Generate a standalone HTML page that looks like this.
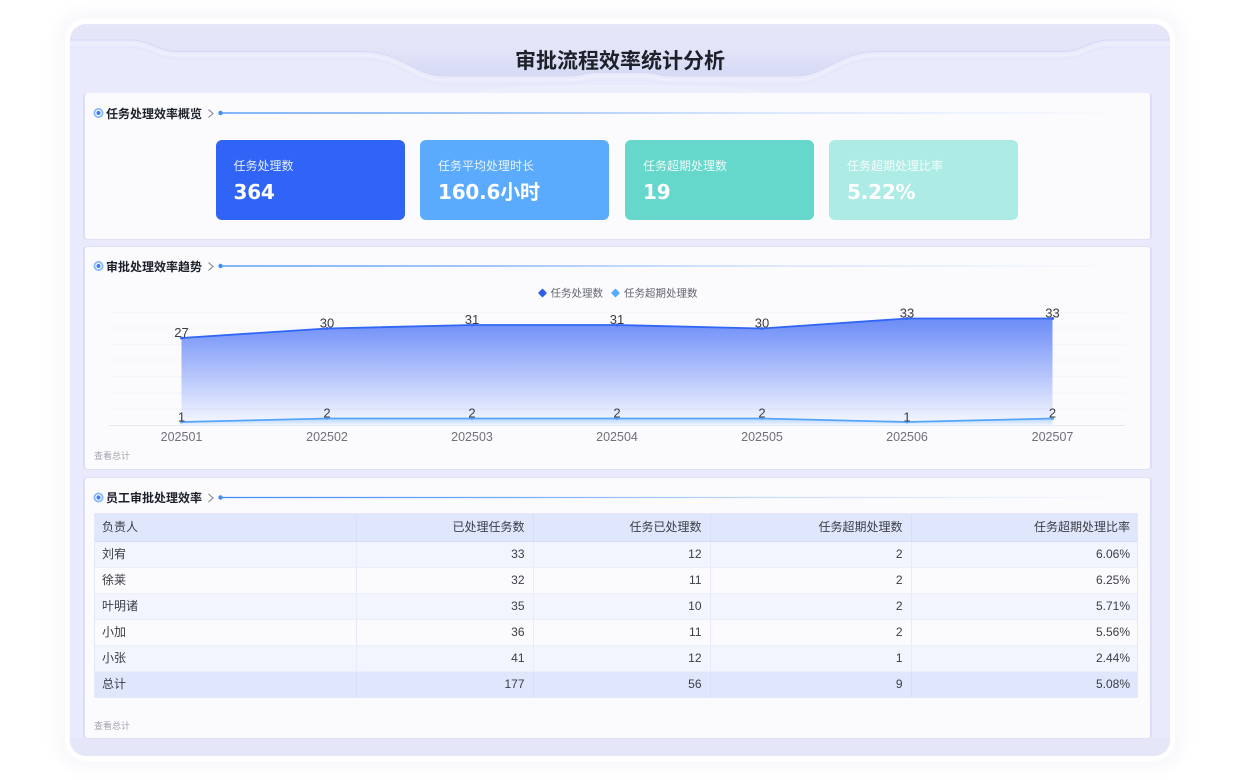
<!DOCTYPE html>
<html lang="zh"><head><meta charset="utf-8"><title>审批流程效率统计分析</title>
<style>
*{box-sizing:border-box;margin:0;padding:0}
html,body{width:1240px;height:780px;overflow:hidden;background:#fff}
body{position:relative;font-family:"Liberation Sans","Noto Sans CJK SC",sans-serif;color:#333}
.abs{position:absolute}
.glow{left:54px;top:8px;width:1132px;height:764px;border-radius:30px;background:#fafafd;filter:blur(5px)}
.rim{left:65px;top:19px;width:1110px;height:742px;border-radius:22px;background:#fff}
.frame{left:70px;top:24px;width:1100px;height:732px;border-radius:16px;background:#e9eafb;overflow:hidden}
.title{left:70px;top:46.500px;width:1100px;text-align:center;font-size:21px;line-height:30px;font-weight:700;color:#1d2129}
.panel{left:82.500px;width:1069.500px;background:#fbfbfe;border:1px solid #dfe0f8;border-left:2px solid #dcddf8;border-right:2px solid #dcddf8;border-radius:4px}
.h{position:absolute;left:106px;font-size:12px;line-height:16px;font-weight:700;color:#1d2129;white-space:nowrap}
.kpi{position:absolute;top:140px;height:80px;border-radius:6px;color:#fff;padding-left:18px}
.kpi .a{position:absolute;top:18px;font-size:12px;line-height:16px;white-space:nowrap;opacity:.88}
.kpi .b{position:absolute;top:37px;font:700 20px/30px "DejaVu Sans","Noto Sans CJK SC",sans-serif;letter-spacing:-.2px;white-space:nowrap}
.more{position:absolute;left:94px;font-size:9px;line-height:12px;color:#a2a3ad}
.t{position:absolute;left:94px;top:513px;width:1044px;height:184px;border-collapse:collapse;table-layout:fixed;font-size:12px;color:#3b3d45;outline:1px solid #e2e7fb;outline-offset:-1px}
.t td{padding:0 8px 1px;text-align:right;border-right:1px solid #e7eafa;border-bottom:1px solid #eceefb;white-space:nowrap;overflow:hidden}
.t tr:first-child td{padding-bottom:0}
.t td:first-child{text-align:left}
.t td:last-child{border-right:0}
.t tr.o{background:#f2f4fe}.t tr.e{background:#fbfbfe}
.t tr.s{background:#e0e6fc}
.t tr.s td{border-right-color:#d6def9;border-bottom-color:#d6def9}
svg{position:absolute;left:0;top:0}
</style></head><body>
<div class="abs glow"></div><div class="abs rim"></div><div class="abs frame"></div>
<svg width="1240" height="780" viewBox="0 0 1240 780" fill="none">
<defs>
<linearGradient id="hd" x1="0" y1="24" x2="0" y2="78" gradientUnits="userSpaceOnUse"><stop offset="0" stop-color="#e5e6f8"/><stop offset=".45" stop-color="#e3e4f8"/><stop offset="1" stop-color="#d5d9f5"/></linearGradient>
<linearGradient id="ar" x1="0" y1="318" x2="0" y2="425" gradientUnits="userSpaceOnUse"><stop offset="0" stop-color="#6a8bf8"/><stop offset="1" stop-color="#6a8bf8" stop-opacity=".03"/></linearGradient>
<linearGradient id="ar2" x1="0" y1="418" x2="0" y2="426" gradientUnits="userSpaceOnUse"><stop offset="0" stop-color="#8fc4ff" stop-opacity=".6"/><stop offset="1" stop-color="#8fc4ff" stop-opacity="0"/></linearGradient>
<linearGradient id="ln" x1="220" y1="0" x2="1130" y2="0" gradientUnits="userSpaceOnUse"><stop offset="0" stop-color="#3f8bf7"/><stop offset=".3" stop-color="#6ea8fa"/><stop offset=".6" stop-color="#c9dcfd"/><stop offset="1" stop-color="#c9dcfd" stop-opacity="0"/></linearGradient>
<clipPath id="fc"><rect x="70" y="24" width="1100" height="732" rx="16"/></clipPath>
</defs>
<g clip-path="url(#fc)">
<path d="M70 24H1170V40H1108C1090 40 1082 51 1062 51.500H878C838 51.500 826 76 796 76H668C660 76 654 72.500 644 72.500H596C586 72.500 580 76 572 76H444C414 76 402 51.500 362 51.500H178C158 51.500 150 40 132 40H70Z" fill="url(#hd)"/>
<path d="M70 40H132C150 40 158 51.500 178 51.500H362C402 51.500 414 76 444 76H572C580 76 586 72.500 596 72.500H644C654 72.500 660 76 668 76H796C826 76 838 51.500 878 51.500H1062C1082 51.500 1090 40 1108 40H1170" stroke="#d6d8f3" stroke-width="1"/>
<path d="M70 44H132C150 44 158 55.500 178 55.500H362C402 55.500 414 80 444 80H572C580 80 586 76.500 596 76.500H644C654 76.500 660 80 668 80H796C826 80 838 55.500 878 55.500H1062C1082 55.500 1090 44 1108 44H1170" stroke="#eef0fc" stroke-width="1.500"/>
<path d="M70 47.500H132C150 47.500 158 59 178 59H362C402 59 414 84 444 84H572C580 84 586 80 596 80H644C654 80 660 84 668 84H796C826 84 838 59 878 59H1062C1082 59 1090 47.500 1108 47.500H1170" stroke="#e3e5f8" stroke-width="1"/>
<path d="M70 738H1170V756H70Z" fill="#e5e6f7"/>
<path d="M470 93C500 82 740 82 770 93Z" fill="#f0f1fd" opacity=".5"/>
</g>
</svg>
<div class="abs title">审批流程效率统计分析</div>
<div class="abs panel" style="top:93px;height:147px;border-top:0"></div>
<div class="abs panel" style="top:246px;height:224px"></div>
<div class="abs panel" style="top:477px;height:262px"></div>

<svg width="1240" height="780" viewBox="0 0 1240 780" fill="none">
<g><circle cx="98.500" cy="113" r="5" fill="#86b8fb"/><circle cx="98.500" cy="113" r="3.200" fill="#fff"/><circle cx="98.500" cy="113" r="2.100" fill="#3c7ff5"/>
<path d="M208.500 109.500L213 113.500L208.500 117.500" stroke="#85868f" stroke-width="1.100"/><circle cx="220.500" cy="113" r="2.200" fill="#3f8bf7"/><path d="M220 113H1130" stroke="url(#ln)" stroke-width="1.300"/></g>
<g><circle cx="98.500" cy="266" r="5" fill="#86b8fb"/><circle cx="98.500" cy="266" r="3.200" fill="#fff"/><circle cx="98.500" cy="266" r="2.100" fill="#3c7ff5"/>
<path d="M208.500 262.500L213 266.500L208.500 270.500" stroke="#85868f" stroke-width="1.100"/><circle cx="220.500" cy="266" r="2.200" fill="#3f8bf7"/><path d="M220 266H1130" stroke="url(#ln)" stroke-width="1.300"/></g>
<g><circle cx="98.500" cy="497.500" r="5" fill="#86b8fb"/><circle cx="98.500" cy="497.500" r="3.200" fill="#fff"/><circle cx="98.500" cy="497.500" r="2.100" fill="#3c7ff5"/>
<path d="M208.500 494L213 498L208.500 502" stroke="#85868f" stroke-width="1.100"/><circle cx="220.500" cy="497.500" r="2.200" fill="#3f8bf7"/><path d="M220 497.500H1130" stroke="url(#ln)" stroke-width="1.300"/></g>

<g stroke="#f5f5fa" stroke-width="1"><path d="M109 312.500H1125M109 328H1125M109 344.500H1125M109 360H1125M109 376.500H1125M109 393H1125M109 409H1125"/></g>
<path d="M109 425.500H1125" stroke="#e8e9f0"/>
<path d="M181.500 338L327 328.500L472 325L617 325L762 328.500L907 318.500L1052.500 318.500V425H181.500Z" fill="url(#ar)"/>
<path d="M181.500 422L327 418.500L472 418.500L617 418.500L762 418.500L907 422L1052.500 418.500V425H181.500Z" fill="url(#ar2)"/>
<path d="M181.500 338L327 328.500L472 325L617 325L762 328.500L907 318.500L1052.500 318.500" stroke="#3066f5" stroke-width="1.800"/>
<path d="M181.500 422L327 418.500L472 418.500L617 418.500L762 418.500L907 422L1052.500 418.500" stroke="#55a6fb" stroke-width="1.800"/>
<g fill="#3066f5"><circle cx="181.500" cy="338" r="1.500"/><circle cx="327" cy="328.500" r="1.500"/><circle cx="472" cy="325" r="1.500"/><circle cx="617" cy="325" r="1.500"/><circle cx="762" cy="328.500" r="1.500"/><circle cx="907" cy="318.500" r="1.500"/><circle cx="1052.500" cy="318.500" r="1.500"/></g>
<g fill="#55a6fb"><circle cx="181.500" cy="422" r="1.500"/><circle cx="327" cy="418.500" r="1.500"/><circle cx="472" cy="418.500" r="1.500"/><circle cx="617" cy="418.500" r="1.500"/><circle cx="762" cy="418.500" r="1.500"/><circle cx="907" cy="422" r="1.500"/><circle cx="1052.500" cy="418.500" r="1.500"/></g>
<g font-family="Liberation Sans,sans-serif" font-size="13" fill="#3a3b42" text-anchor="middle">
<text x="181.500" y="337">27</text><text x="327" y="327.500">30</text><text x="472" y="324">31</text><text x="617" y="324">31</text><text x="762" y="327.500">30</text><text x="907" y="317.500">33</text><text x="1052.500" y="317.500">33</text>
<text x="181.500" y="421.500">1</text><text x="327" y="417.500">2</text><text x="472" y="417.500">2</text><text x="617" y="417.500">2</text><text x="762" y="417.500">2</text><text x="907" y="421.500">1</text><text x="1052.500" y="417.500">2</text>
</g>
<g font-family="Liberation Sans,sans-serif" font-size="12.500" fill="#6f7079" text-anchor="middle">
<text x="181.500" y="441">202501</text><text x="327" y="441">202502</text><text x="472" y="441">202503</text><text x="617" y="441">202504</text><text x="762" y="441">202505</text><text x="907" y="441">202506</text><text x="1052.500" y="441">202507</text>
</g>
<path d="M542.500 289.500L546 293L542.500 296.500L539 293Z" fill="#2c5fe8" stroke="#2c5fe8" stroke-width="1.500" stroke-linejoin="round"/>
<path d="M615.500 289.500L619 293L615.500 296.500L612 293Z" fill="#58aafc" stroke="#58aafc" stroke-width="1.500" stroke-linejoin="round"/>
<g font-family="Liberation Sans,Noto Sans CJK SC,sans-serif" font-size="10.500" fill="#63646d">
<text x="550.500" y="296.500">任务处理数</text><text x="624" y="296.500">任务超期处理数</text>
</g>
</svg>

<div class="h" style="top:106px">任务处理效率概览</div>
<div class="h" style="top:259px">审批处理效率趋势</div>
<div class="h" style="top:490px">员工审批处理效率</div>

<div class="kpi" style="left:215.500px;width:189.500px;background:#2f64f7"><div class="a">任务处理数</div><div class="b">364</div></div>
<div class="kpi" style="left:420px;width:189px;background:#5aaafd"><div class="a">任务平均处理时长</div><div class="b">160.6小时</div></div>
<div class="kpi" style="left:625px;width:189px;background:#65d8cb"><div class="a">任务超期处理数</div><div class="b">19</div></div>
<div class="kpi" style="left:829px;width:189px;background:#adebe5"><div class="a">任务超期处理比率</div><div class="b">5.22%</div></div>

<table class="t">
<colgroup><col style="width:262px"><col style="width:177px"><col style="width:177px"><col style="width:201px"><col style="width:227px"></colgroup>
<tr class="s" style="height:28px"><td>负责人</td><td>已处理任务数</td><td>任务已处理数</td><td>任务超期处理数</td><td>任务超期处理比率</td></tr>
<tr class="o" style="height:26px"><td>刘宥</td><td>33</td><td>12</td><td>2</td><td>6.06%</td></tr>
<tr class="e" style="height:26px"><td>徐莱</td><td>32</td><td>11</td><td>2</td><td>6.25%</td></tr>
<tr class="o" style="height:26px"><td>叶明诸</td><td>35</td><td>10</td><td>2</td><td>5.71%</td></tr>
<tr class="e" style="height:26px"><td>小加</td><td>36</td><td>11</td><td>2</td><td>5.56%</td></tr>
<tr class="o" style="height:26px"><td>小张</td><td>41</td><td>12</td><td>1</td><td>2.44%</td></tr>
<tr class="s" style="height:26px"><td>总计</td><td>177</td><td>56</td><td>9</td><td>5.08%</td></tr>
</table>
<div class="more" style="top:450px">查看总计</div>
<div class="more" style="top:720px">查看总计</div>
</body></html>
